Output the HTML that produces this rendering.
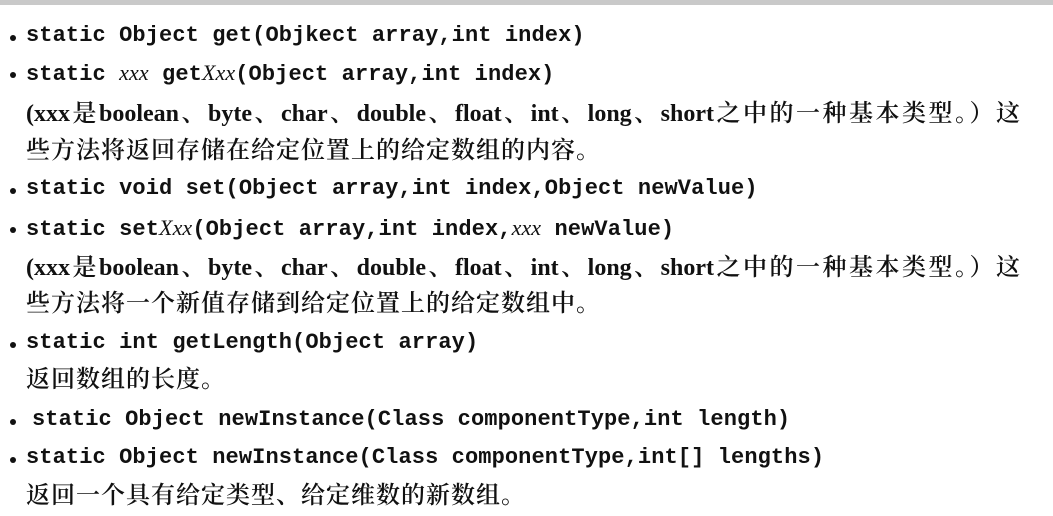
<!DOCTYPE html>
<html><head><meta charset="utf-8"><style>
html,body{margin:0;padding:0;background:#fff;}
body{width:1053px;height:516px;position:relative;overflow:hidden;color:#111;}
.top{position:absolute;left:0;top:0;width:1053px;height:5px;background:#c9c9c9;}
.l{position:absolute;left:26px;height:38px;line-height:38px;white-space:nowrap;}
.c{font-family:"Liberation Mono",monospace;font-size:22px;font-weight:bold;letter-spacing:0.1px;}
.c i{font-family:"Liberation Serif",serif;font-weight:normal;}
.z{font-family:"Liberation Serif","Noto Serif CJK SC",serif;font-size:24px;letter-spacing:1px;font-weight:600;}
.j{width:994px;text-align:justify;text-align-last:justify;letter-spacing:0;}
.b{position:absolute;left:10px;width:6px;height:6px;border-radius:50%;background:#111;}
</style></head><body>
<div class="top"></div>
<div class="b" style="top:35px"></div><div class="l c" style="top:17px">static Object get(Objkect array,int index)</div>
<div class="b" style="top:72px"></div><div class="l c" style="top:54px">static <i>xxx</i> get<i>Xxx</i>(Object array,int index)</div>
<div class="l z j" style="top:95px">(xxx是boolean、byte、char、double、float、int、long、short之中的一种基本类型。）这</div>
<div class="l z" style="top:132px">些方法将返回存储在给定位置上的给定数组的内容。</div>
<div class="b" style="top:188px"></div><div class="l c" style="top:170px">static void set(Object array,int index,Object newValue)</div>
<div class="b" style="top:227px"></div><div class="l c" style="top:209px">static set<i>Xxx</i>(Object array,int index,<i>xxx</i> newValue)</div>
<div class="l z j" style="top:249px">(xxx是boolean、byte、char、double、float、int、long、short之中的一种基本类型。）这</div>
<div class="l z" style="top:285px">些方法将一个新值存储到给定位置上的给定数组中。</div>
<div class="b" style="top:342px"></div><div class="l c" style="top:324px">static int getLength(Object array)</div>
<div class="l z" style="top:361px">返回数组的长度。</div>
<div class="b" style="top:419px"></div><div class="l c" style="top:401px;left:32px">static Object newInstance(Class componentType,int length)</div>
<div class="b" style="top:457px"></div><div class="l c" style="top:439px">static Object newInstance(Class componentType,int[] lengths)</div>
<div class="l z" style="top:477px">返回一个具有给定类型、给定维数的新数组。</div>
</body></html>
